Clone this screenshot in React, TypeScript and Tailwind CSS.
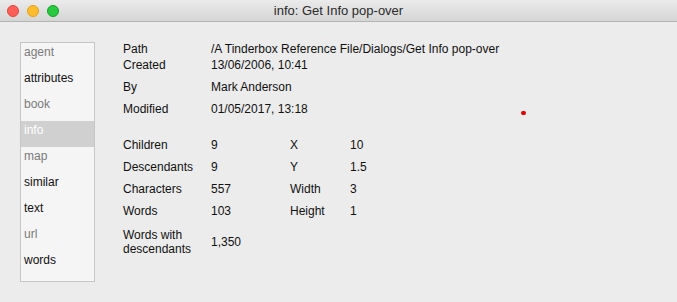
const ITEMS = [
  { label: "agent", dim: true },
  { label: "attributes", dim: false },
  { label: "book", dim: true },
  { label: "info", dim: false, active: true },
  { label: "map", dim: true },
  { label: "similar", dim: false },
  { label: "text", dim: false },
  { label: "url", dim: true },
  { label: "words", dim: false },
];

const STATS = [
  { label: "Children", value: "9", k: "X", v: "10" },
  { label: "Descendants", value: "9", k: "Y", v: "1.5" },
  { label: "Characters", value: "557", k: "Width", v: "3" },
  { label: "Words", value: "103", k: "Height", v: "1" },
];

export default function App() {
  return (
    <div
      className="flex h-[302px] w-[677px] flex-col overflow-hidden bg-[#ececec] text-[12px] text-[#111]"
      style={{ fontFamily: '"Liberation Sans", Arial, sans-serif' }}
    >
      {/* title bar */}
      <div className="relative flex h-[22px] shrink-0 items-center justify-center border-b border-[#b4b4b4] bg-gradient-to-b from-[#ebebeb] to-[#d5d5d5]">
        <div className="absolute left-[7px] top-[5px] flex gap-[8px]">
          <span className="h-[12px] w-[12px] rounded-full border border-[#e2463f] bg-[#fc5f57]" />
          <span className="h-[12px] w-[12px] rounded-full border border-[#e1a116] bg-[#fdbc2e]" />
          <span className="h-[12px] w-[12px] rounded-full border border-[#13a224] bg-[#29c940]" />
        </div>
        <span className="text-[13px] text-[#2a2a2a]">info: Get Info pop-over</span>
      </div>

      <div className="relative flex flex-1 pl-[20px] pt-[20px]">
        {/* category list */}
        <div className="h-[240px] w-[75px] shrink-0 border border-[#c6c6c6] bg-[#f5f5f5]">
          {ITEMS.map((it) => (
            <div
              key={it.label}
              className={
                it.active
                  ? "h-[26px] bg-[#d0d0d0] pl-[3px] pt-[1px] leading-[16px] text-white"
                  : it.dim
                  ? "h-[26px] pl-[3px] pt-[1px] leading-[16px] text-[#7a7a7a]"
                  : "h-[26px] pl-[3px] pt-[1px] leading-[16px] text-[#111]"
              }
            >
              {it.label}
            </div>
          ))}
        </div>

        {/* info fields */}
        <div className="ml-[28px] flex flex-col pt-[-1px] leading-[16px]">
          <div className="-mt-[1px] flex">
            <span className="w-[88px]">Path</span>
            <span>/A Tinderbox Reference File/Dialogs/Get Info pop-over</span>
          </div>
          <div className="flex">
            <span className="w-[88px]">Created</span>
            <span>13/06/2006, 10:41</span>
          </div>
          <div className="mt-[6px] flex">
            <span className="w-[88px]">By</span>
            <span>Mark Anderson</span>
          </div>
          <div className="mt-[6px] flex">
            <span className="w-[88px]">Modified</span>
            <span>01/05/2017, 13:18</span>
          </div>

          <div className="mt-[20px] flex flex-col gap-[6px]">
            {STATS.map((s) => (
              <div key={s.label} className="flex">
                <span className="w-[88px]">{s.label}</span>
                <span className="w-[79px]">{s.value}</span>
                <span className="w-[60px]">{s.k}</span>
                <span>{s.v}</span>
              </div>
            ))}
          </div>

          <div className="mt-[9px] flex items-center leading-[14px]">
            <span className="w-[88px]">
              Words with
              <br />
              descendants
            </span>
            <span>1,350</span>
          </div>
        </div>

        {/* stray marker */}
        <span className="absolute left-[521px] top-[89px] h-[4px] w-[5px] rounded-full bg-[#e60000]" />
      </div>
    </div>
  );
}
